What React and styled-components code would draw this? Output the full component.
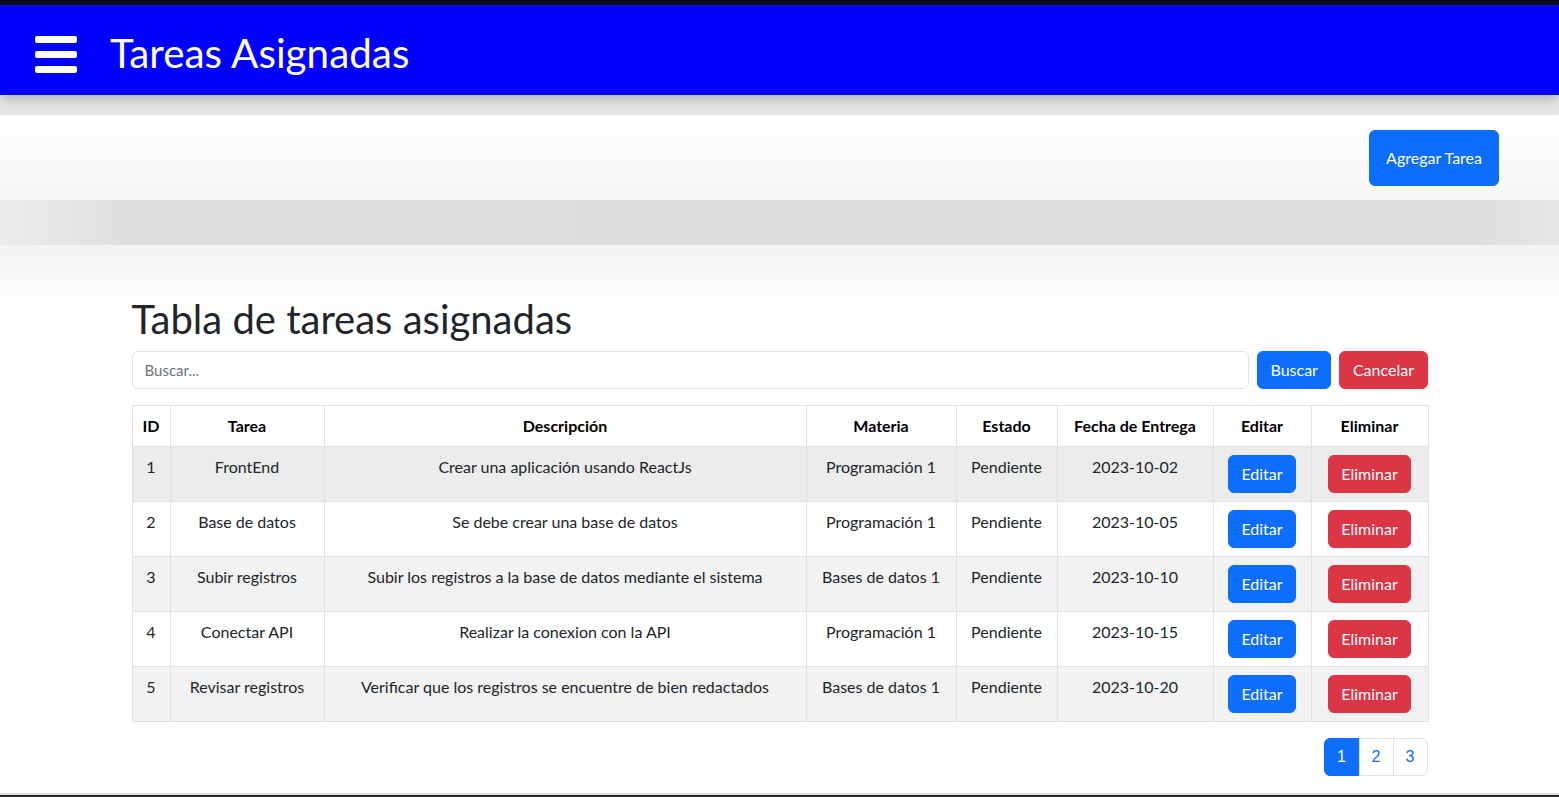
import React from "react";
import styled, { createGlobalStyle } from "styled-components";

const Global = createGlobalStyle`
  * { box-sizing: border-box; }
  html, body { margin: 0; padding: 0; }
  body {
    background: #e8e8e8;
    font-family: Lato, "Noto Sans", sans-serif;
    color: #212529;
    font-size: 16px;
    line-height: 1.5;
  }
`;

const TopStrip = styled.div`
  height: 5px;
  background: #0d0c1a;
`;

const Header = styled.header`
  height: 90px;
  background: #0000ff;
  display: flex;
  align-items: center;
  gap: 33px;
  padding: 9px 0 0 35px;
  box-shadow: 0 4px 12px rgba(0, 0, 0, 0.25);
  position: relative;
  z-index: 2;
`;

const HeaderTitle = styled.h1`
  margin: 0;
  color: #fff;
  font-size: 40.4px;
  font-weight: 400;
  line-height: 1;
  padding-bottom: 2px;
`;

const ActionPanel = styled.section`
  margin-top: 20px;
  height: 85px;
  background: linear-gradient(#ffffff, #f6f6f6);
  display: flex;
  justify-content: flex-end;
  align-items: flex-start;
  padding: 15px 60px 0 0;
  box-shadow: 0 0 10px rgba(0, 0, 0, 0.04);
`;

const Band = styled.div`
  height: 45px;
  background: linear-gradient(90deg, #ececec 0%, #dfdfdf 8%, #dddddd 50%, #dfdfdf 95%, #e6e6e6 100%);
`;

const Button = styled.button`
  font-family: Lato, "Noto Sans", sans-serif;
  font-size: 16px;
  line-height: 24px;
  color: #fff;
  border: 1px solid ${(p) => (p.$variant === "danger" ? "#dc3545" : "#0d6efd")};
  background: ${(p) => (p.$variant === "danger" ? "#dc3545" : "#0d6efd")};
  border-radius: 6px;
  padding: ${(p) => (p.$big ? "15px 16px" : "6px 12.5px")};
  cursor: pointer;
  white-space: nowrap;
`;

const MainPanel = styled.main`
  background: linear-gradient(#f3f3f3 0px, #fbfbfb 40px, #ffffff 70px);
  padding: 50px 0 17px;
`;

const Container = styled.div`
  width: 1296px;
  margin: 0 auto;
`;

const PageTitle = styled.h2`
  margin: 0 0 8px;
  font-size: 40px;
  font-weight: 400;
  line-height: 48px;
  color: #212529;
`;

const SearchRow = styled.div`
  display: flex;
  gap: 8px;
  margin-bottom: 16px;
`;

const SearchInput = styled.input`
  flex: 1;
  height: 38px;
  border: 1px solid #dee2e6;
  border-radius: 6px;
  padding: 6px 12px;
  font-family: Lato, "Noto Sans", sans-serif;
  font-size: 15px;
  color: #212529;
  outline: none;
  &::placeholder { color: #6c757d; }
`;

const Table = styled.table`
  width: 1296px;
  border-collapse: collapse;
  table-layout: fixed;
  margin-bottom: 16px;
`;

const Th = styled.th`
  border: 1px solid #dee2e6;
  padding: 8px;
  font-weight: 700;
  text-align: center;
  line-height: 24px;
  background: #fff;
  color: #000;
`;

const Tr = styled.tr`
  background: ${(p) => p.$bg};
`;

const Td = styled.td`
  border: 1px solid #dee2e6;
  padding: 8px;
  text-align: center;
  vertical-align: top;
  line-height: 24px;
  height: 55px;
  white-space: nowrap;
`;

const ActionTd = styled(Td)`
  vertical-align: middle;
  padding: 7px 8px 8px;
`;

const Pagination = styled.nav`
  display: flex;
  justify-content: flex-end;
`;

const PageItem = styled.a`
  font-family: "Liberation Sans", Arial, sans-serif;
  font-size: 16px;
  line-height: 24px;
  padding: 6px 0;
  width: ${(p) => (p.$first ? 36 : 35)}px;
  text-align: center;
  border: 1px solid ${(p) => (p.$active ? "#0d6efd" : "#dee2e6")};
  margin-left: ${(p) => (p.$first ? 0 : -1)}px;
  background: ${(p) => (p.$active ? "#0d6efd" : "#fff")};
  color: ${(p) => (p.$active ? "#fff" : "#0d6efd")};
  text-decoration: none;
  &:first-child { border-radius: 6px 0 0 6px; }
  &:last-child { border-radius: 0 6px 6px 0; }
`;

const Footer = styled.div`
  border-top: 2px solid #e2e2e2;
  height: 20px;
  background: #262626;
`;

const MenuIcon = () => (
  <svg width="42" height="37" viewBox="0 0 42 37">
    <rect x="0" y="0" width="42" height="7" rx="2" fill="#fff" />
    <rect x="0" y="15" width="42" height="7" rx="2" fill="#fff" />
    <rect x="0" y="30" width="42" height="7" rx="2" fill="#fff" />
  </svg>
);

const colWidths = [38, 154, 482, 150, 101, 156, 98, 117];
const headers = ["ID", "Tarea", "Descripción", "Materia", "Estado", "Fecha de Entrega", "Editar", "Eliminar"];

const rows = [
  [1, "FrontEnd", "Crear una aplicación usando ReactJs", "Programación 1", "Pendiente", "2023-10-02"],
  [2, "Base de datos", "Se debe crear una base de datos", "Programación 1", "Pendiente", "2023-10-05"],
  [3, "Subir registros", "Subir los registros a la base de datos mediante el sistema", "Bases de datos 1", "Pendiente", "2023-10-10"],
  [4, "Conectar API", "Realizar la conexion con la API", "Programación 1", "Pendiente", "2023-10-15"],
  [5, "Revisar registros", "Verificar que los registros se encuentre de bien redactados", "Bases de datos 1", "Pendiente", "2023-10-20"],
];

const rowBg = ["#ececec", "#ffffff", "#f2f2f2", "#ffffff", "#f2f2f2"];

export default function App() {
  return (
    <>
      <Global />
      <TopStrip />
      <Header>
        <MenuIcon />
        <HeaderTitle>Tareas Asignadas</HeaderTitle>
      </Header>
      <ActionPanel>
        <Button $big>Agregar Tarea</Button>
      </ActionPanel>
      <Band />
      <MainPanel>
        <Container>
          <PageTitle>Tabla de tareas asignadas</PageTitle>
          <SearchRow>
            <SearchInput placeholder="Buscar..." />
            <Button>Buscar</Button>
            <Button $variant="danger">Cancelar</Button>
          </SearchRow>
          <Table>
            <colgroup>
              {colWidths.map((w, i) => (
                <col key={i} style={{ width: w }} />
              ))}
            </colgroup>
            <thead>
              <tr>
                {headers.map((h) => (
                  <Th key={h}>{h}</Th>
                ))}
              </tr>
            </thead>
            <tbody>
              {rows.map((r, i) => (
                <Tr key={r[0]} $bg={rowBg[i]}>
                  {r.map((c, j) => (
                    <Td key={j}>{c}</Td>
                  ))}
                  <ActionTd>
                    <Button>Editar</Button>
                  </ActionTd>
                  <ActionTd>
                    <Button $variant="danger">Eliminar</Button>
                  </ActionTd>
                </Tr>
              ))}
            </tbody>
          </Table>
          <Pagination>
            <PageItem href="#" $active $first>1</PageItem>
            <PageItem href="#">2</PageItem>
            <PageItem href="#">3</PageItem>
          </Pagination>
        </Container>
      </MainPanel>
      <Footer />
    </>
  );
}
